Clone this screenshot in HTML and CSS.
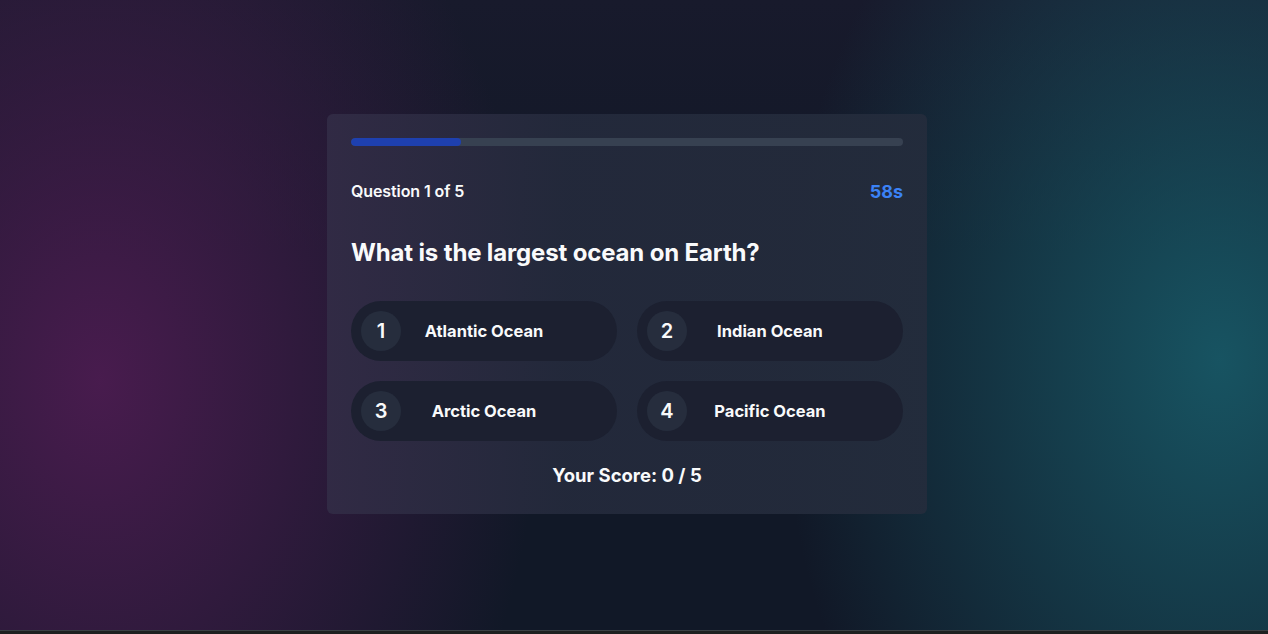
FILE: index.html
```html
<!DOCTYPE html>
<html lang="en">
<head>
<meta charset="utf-8">
<title>Quiz</title>
<link rel="stylesheet" href="styles.css">
</head>
<body>
<main class="stage">
  <section class="card">
    <div class="progress"><div class="progress-fill" style="width:20%"></div></div>
    <div class="meta">
      <span class="counter">Question 1 of 5</span>
      <span class="timer">58s</span>
    </div>
    <h1 class="question">What is the largest ocean on Earth?</h1>
    <div class="options">
      <button class="option"><span class="num">1</span><span class="label">Atlantic Ocean</span></button>
      <button class="option"><span class="num">2</span><span class="label">Indian Ocean</span></button>
      <button class="option"><span class="num">3</span><span class="label">Arctic Ocean</span></button>
      <button class="option"><span class="num">4</span><span class="label">Pacific Ocean</span></button>
    </div>
    <p class="score">Your Score: 0 / 5</p>
  </section>
</main>
<div class="bottom-bar"></div>
</body>
</html>
```
FILE: styles.css
```css
* { box-sizing: border-box; }
html, body { margin: 0; padding: 0; }
body {
  height: 634px;
  overflow: hidden;
  font-family: "Inter", "Liberation Sans", sans-serif;
  color: #f9fafb;
  background: #111827;
  display: flex;
  flex-direction: column;
}
.stage {
  height: 630px;
  display: flex;
  justify-content: center;
  padding-top: 114px;
  padding-right: 14px;
  background:
    radial-gradient(ellipse 440px 620px at 100px 380px, rgba(78, 28, 82, 0.9), rgba(78, 28, 82, 0) 100%),
    radial-gradient(ellipse 440px 620px at 1220px 360px, rgba(24, 90, 104, 0.9), rgba(24, 90, 104, 0) 100%),
    linear-gradient(180deg, #181a2c 0%, #111827 40%, #111827 100%);
}
.bottom-bar {
  height: 4px;
  background: #1d2020;
  border-top: 1px solid #3a4044;
}
.card {
  width: 600px;
  height: 400px;
  padding: 24px;
  border-radius: 6px;
  background: linear-gradient(90deg, rgba(50, 44, 70, 0.9) 0%, rgba(36, 42, 60, 0.92) 40%, rgba(36, 44, 60, 0.92) 100%);
}
.progress {
  height: 8px;
  border-radius: 4px;
  background: #374151;
  overflow: hidden;
}
.progress-fill {
  height: 100%;
  background: #1e40af;
  border-radius: 4px;
}
.meta {
  display: flex;
  justify-content: space-between;
  align-items: center;
  margin-top: 34px;
  height: 22px;
}
.counter { font-size: 16px; font-weight: 600; letter-spacing: -0.1px; }
.timer { font-size: 18px; font-weight: 700; color: #3b82f6; }
.question {
  margin: 36px 0 0;
  font-size: 24px;
  line-height: 30px;
  font-weight: 700;
  letter-spacing: -0.15px;
}
.options {
  margin-top: 33px;
  display: grid;
  grid-template-columns: 1fr 1fr;
  gap: 20px;
}
.option {
  position: relative;
  height: 60px;
  border: none;
  border-radius: 30px;
  background: #1c2030;
  color: #f9fafb;
  font-family: inherit;
  display: flex;
  align-items: center;
  justify-content: center;
  padding: 0;
}
.num {
  position: absolute;
  left: 10px;
  top: 10px;
  width: 40px;
  height: 40px;
  border-radius: 50%;
  background: #262d3d;
  display: flex;
  align-items: center;
  justify-content: center;
  font-size: 20px;
  font-weight: 600;
}
.label { font-size: 16.5px; font-weight: 700; }
.score {
  margin: 23px 0 0;
  text-align: center;
  font-size: 18.5px;
  font-weight: 700;
  line-height: 22px;
}
```
